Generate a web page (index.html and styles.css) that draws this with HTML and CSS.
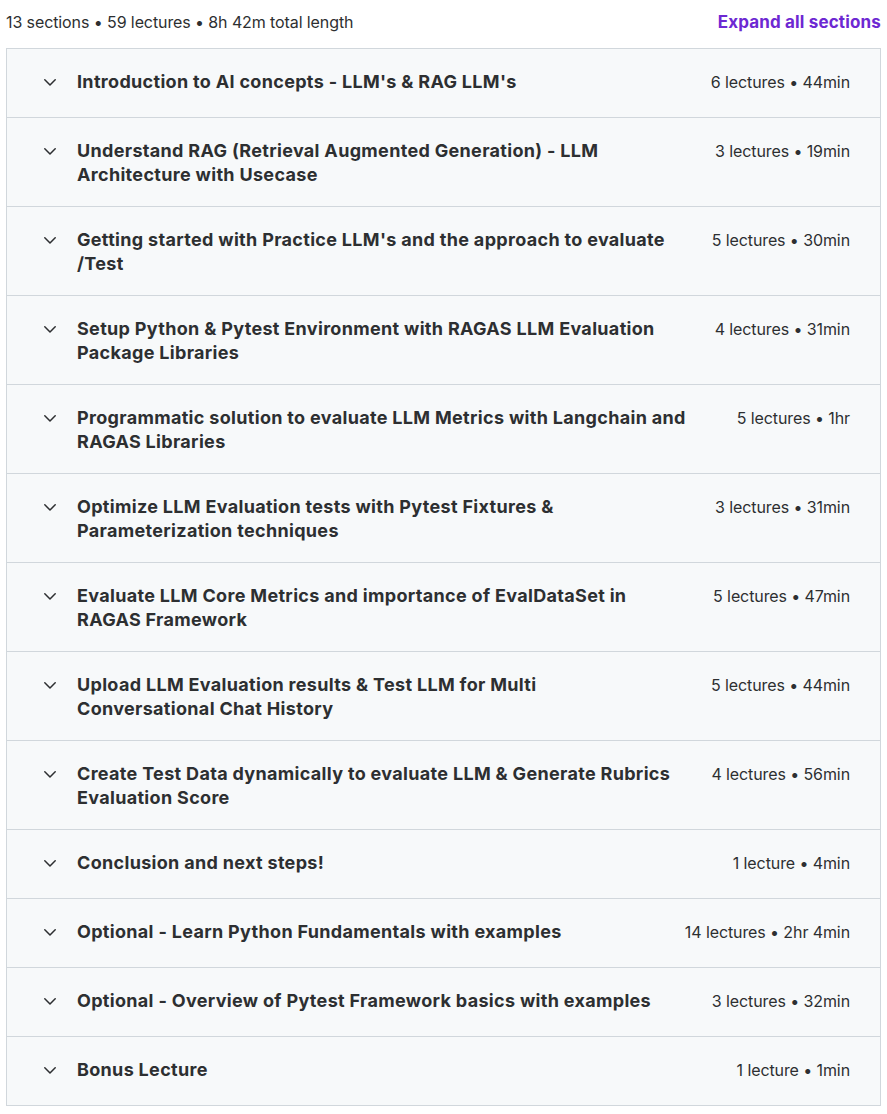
FILE: index.html
```html
<!DOCTYPE html>
<html lang="en">
<head>
<meta charset="utf-8">
<title>Course content</title>
<link rel="stylesheet" href="styles.css">
</head>
<body>
<div class="curriculum">
  <div class="summary">
    <span class="summary-text">13 sections • 59 lectures • 8h 42m total length</span>
    <button class="expand">Expand all sections</button>
  </div>
  <div class="sections">
    <div class="section"><span class="chev"><svg viewBox="0 0 12 7" width="12" height="7"><path d="M0.8 0.8l5.2 5.2 5.2-5.2"/></svg></span><span class="title">Introduction to AI concepts - LLM's &amp; RAG LLM's</span><span class="meta">6 lectures • 44min</span></div>
    <div class="section"><span class="chev"><svg viewBox="0 0 12 7" width="12" height="7"><path d="M0.8 0.8l5.2 5.2 5.2-5.2"/></svg></span><span class="title">Understand RAG (Retrieval Augmented Generation) - LLM Architecture with Usecase</span><span class="meta">3 lectures • 19min</span></div>
    <div class="section"><span class="chev"><svg viewBox="0 0 12 7" width="12" height="7"><path d="M0.8 0.8l5.2 5.2 5.2-5.2"/></svg></span><span class="title">Getting started with Practice LLM's and the approach to evaluate /Test</span><span class="meta">5 lectures • 30min</span></div>
    <div class="section"><span class="chev"><svg viewBox="0 0 12 7" width="12" height="7"><path d="M0.8 0.8l5.2 5.2 5.2-5.2"/></svg></span><span class="title">Setup Python &amp; Pytest Environment with RAGAS LLM Evaluation Package Libraries</span><span class="meta">4 lectures • 31min</span></div>
    <div class="section"><span class="chev"><svg viewBox="0 0 12 7" width="12" height="7"><path d="M0.8 0.8l5.2 5.2 5.2-5.2"/></svg></span><span class="title">Programmatic solution to evaluate LLM Metrics with Langchain and RAGAS Libraries</span><span class="meta">5 lectures • 1hr</span></div>
    <div class="section"><span class="chev"><svg viewBox="0 0 12 7" width="12" height="7"><path d="M0.8 0.8l5.2 5.2 5.2-5.2"/></svg></span><span class="title">Optimize LLM Evaluation tests with Pytest Fixtures &amp; Parameterization techniques</span><span class="meta">3 lectures • 31min</span></div>
    <div class="section"><span class="chev"><svg viewBox="0 0 12 7" width="12" height="7"><path d="M0.8 0.8l5.2 5.2 5.2-5.2"/></svg></span><span class="title">Evaluate LLM Core Metrics and importance of EvalDataSet in RAGAS Framework</span><span class="meta">5 lectures • 47min</span></div>
    <div class="section"><span class="chev"><svg viewBox="0 0 12 7" width="12" height="7"><path d="M0.8 0.8l5.2 5.2 5.2-5.2"/></svg></span><span class="title">Upload LLM Evaluation results &amp; Test LLM for Multi Conversational Chat History</span><span class="meta">5 lectures • 44min</span></div>
    <div class="section"><span class="chev"><svg viewBox="0 0 12 7" width="12" height="7"><path d="M0.8 0.8l5.2 5.2 5.2-5.2"/></svg></span><span class="title">Create Test Data dynamically to evaluate LLM &amp; Generate Rubrics Evaluation Score</span><span class="meta">4 lectures • 56min</span></div>
    <div class="section"><span class="chev"><svg viewBox="0 0 12 7" width="12" height="7"><path d="M0.8 0.8l5.2 5.2 5.2-5.2"/></svg></span><span class="title">Conclusion and next steps!</span><span class="meta">1 lecture • 4min</span></div>
    <div class="section"><span class="chev"><svg viewBox="0 0 12 7" width="12" height="7"><path d="M0.8 0.8l5.2 5.2 5.2-5.2"/></svg></span><span class="title">Optional - Learn Python Fundamentals with examples</span><span class="meta">14 lectures • 2hr 4min</span></div>
    <div class="section"><span class="chev"><svg viewBox="0 0 12 7" width="12" height="7"><path d="M0.8 0.8l5.2 5.2 5.2-5.2"/></svg></span><span class="title">Optional - Overview of Pytest Framework basics with examples</span><span class="meta">3 lectures • 32min</span></div>
    <div class="section"><span class="chev"><svg viewBox="0 0 12 7" width="12" height="7"><path d="M0.8 0.8l5.2 5.2 5.2-5.2"/></svg></span><span class="title">Bonus Lecture</span><span class="meta">1 lecture • 1min</span></div>
  </div>
</div>
</body>
</html>
```

FILE: styles.css
```css
* { box-sizing: border-box; }
html, body { margin: 0; padding: 0; background: #fff; }
body {
  font-family: Inter, "Noto Sans", "Liberation Sans", sans-serif;
  color: #2d2f31;
  -webkit-font-smoothing: antialiased;
}
.curriculum { padding: 0 6px 0 6px; }
.summary {
  display: flex;
  justify-content: space-between;
  align-items: center;
  height: 48px;
  padding-bottom: 4px;
}
.summary-text { font-size: 16px; font-weight: 400; color: #2d2f31; letter-spacing: -0.1px; }
.expand {
  border: 0; background: none; padding: 0; cursor: pointer;
  font-family: inherit; font-size: 17px; font-weight: 700; color: #6d28d2;
  letter-spacing: 0.15px;
}
.sections { border: 1px solid #d1d7dc; border-bottom: 0; }
.section {
  display: flex;
  align-items: flex-start;
  min-height: 69px;
  padding: 21px 30px 19px 37px;
  background: #f7f9fa;
  border-bottom: 1px solid #d1d7dc;
}
.chev { flex: none; width: 33px; height: 24px; display: flex; align-items: center; }
.chev svg { fill: none; stroke: #2d2f31; stroke-width: 1.5; stroke-linecap: round; stroke-linejoin: round; }
.title { flex: 1; font-size: 18px; line-height: 24px; font-weight: 700; letter-spacing: 0.32px; }
.meta { flex: none; margin-left: 36px; font-size: 16px; line-height: 24px; font-weight: 400; letter-spacing: -0.1px; white-space: nowrap; }
```
